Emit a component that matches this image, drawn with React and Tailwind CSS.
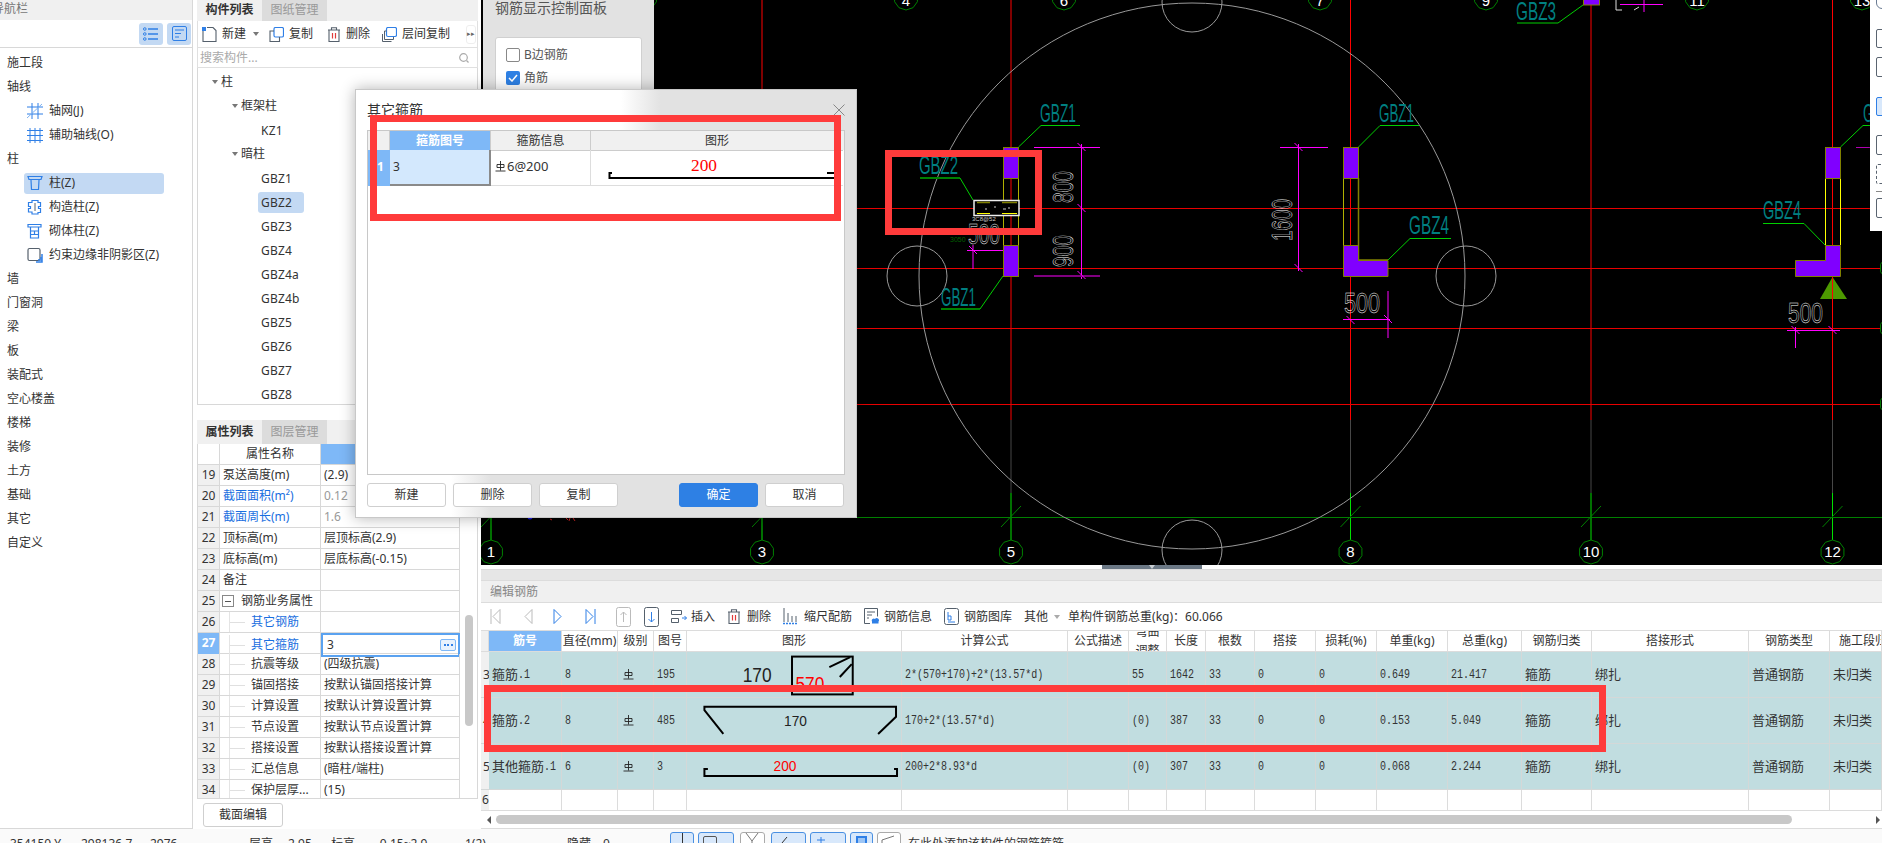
import React from 'react';

const BLUE = '#2f7fe6';
const DARK = '#55606c';

// ---- small icons ----
const Svg = ({ w = 16, h = 16, className = '', children }) => (
  <svg width={w} height={h} viewBox={`0 0 ${w} ${h}`} fill="none" className={`shrink-0 ${className}`}>
    {children}
  </svg>
);

const GridIcon = () => (
  <Svg>
    <path d="M5 0v16M11 0v16M0 4h16M0 11h16" stroke={BLUE} />
    <path d="M0 15L15 1" stroke="#7fb2f0" />
  </Svg>
);
const AuxGridIcon = () => (
  <Svg>
    <path d="M3 1v15M8 1v15M13 1v15M0 3.500h16M0 8.500h16M0 13.500h16" stroke={BLUE} />
  </Svg>
);
const ColumnIcon = () => (
  <Svg>
    <path d="M1 1.500h14l-1 3H2zM4 5l.5 9.500h7L12 5" stroke={BLUE} strokeWidth="1.200" />
  </Svg>
);
const PuzzleIcon = () => (
  <Svg>
    <path d="M5 1.500h6v2h2.500v4h-2v2h2v4H11v1.500H5V13H1.500V9.500h2v-2h-2v-4H5z" stroke={BLUE} strokeWidth="1.200" />
    <path d="M8 4v8" stroke={DARK} />
  </Svg>
);
const MasonryIcon = () => (
  <Svg>
    <path d="M1 1.500h13v2.500H1zM3.500 4v11h8V4M3.500 8h8M3.500 11.500h8M7.500 8v3.500" stroke={BLUE} strokeWidth="1.200" />
  </Svg>
);
const EdgeIcon = () => (
  <Svg>
    <rect x="1" y="1.500" width="12" height="12" rx="1.500" stroke={DARK} strokeWidth="1.200" />
    <path d="M9 15h6V7M11 13h4M13 11h2" stroke={BLUE} strokeWidth="1.500" />
  </Svg>
);
const ListIcon = () => (
  <Svg w={16} h={14}>
    <path d="M5 2h10M5 7h10M5 12h10" stroke={BLUE} strokeWidth="1.300" />
    <circle cx="1.800" cy="2" r="1.300" stroke={BLUE} />
    <circle cx="1.800" cy="7" r="1.300" stroke={BLUE} />
    <circle cx="1.800" cy="12" r="1.300" stroke={BLUE} />
  </Svg>
);
const FormIcon = () => (
  <Svg w={15} h={15}>
    <rect x="0.500" y="0.500" width="14" height="14" rx="1.500" stroke={BLUE} />
    <path d="M3 4h9M3 7.500h6M3 11h4" stroke={BLUE} />
  </Svg>
);
const NewIcon = () => (
  <Svg w={15} h={15}>
    <path d="M1 3v11.500h13V3.500L11 .5H5" stroke={DARK} strokeWidth="1.100" />
    <path d="M0 0h4v4H0z" fill={BLUE} />
  </Svg>
);
const CopyIcon = () => (
  <Svg w={15} h={15}>
    <rect x="5" y="0.500" width="9.500" height="9.500" rx="1.500" stroke={BLUE} strokeWidth="1.200" />
    <path d="M5 4H1v10.500h9.500V10" stroke={DARK} strokeWidth="1.100" />
  </Svg>
);
const TrashIcon = () => (
  <Svg w={14} h={15}>
    <path d="M1 3h12M4.500 3V.7h5V3M2 3v11.500h10V3" stroke={DARK} strokeWidth="1.100" />
    <path d="M5.500 6v5.500M8.500 6v5.500" stroke="#e03b3b" strokeWidth="1.200" />
  </Svg>
);
const LayerCopyIcon = () => (
  <Svg w={15} h={15}>
    <rect x="4.500" y="0.500" width="10" height="9" rx="1.500" stroke={BLUE} strokeWidth="1.200" />
    <path d="M4.500 4H2.500v8.500h9V10M.5 7v7.500h9" stroke={DARK} />
  </Svg>
);
const SearchIcon = () => (
  <Svg w={10} h={10}>
    <circle cx="4.500" cy="4.500" r="3.800" stroke="#aaa" strokeWidth="1.200" />
    <path d="M7.500 7.500L9.500 9.500" stroke="#aaa" strokeWidth="1.200" />
  </Svg>
);
const Caret = ({ color = '#777' }) => (
  <Svg w={6} h={4}>
    <path d="M0 0h6L3 4z" fill={color} />
  </Svg>
);
const Rebar = () => (
  <svg width="11" height="11" viewBox="0 0 11 11" fill="none" className="inline-block align-[-1px]">
    <path d="M2 3.500h7v3H2zM5.500 0v9.500M.5 10h10" stroke="#222" strokeWidth="0.900" />
  </svg>
);

// nav arrows in the rebar editor
const Arrow = ({ dir, bar, color }) => (
  <Svg w={11} h={17}>
    {dir === 'left' ? <path d="M10 1.500L3 8.500l7 7z" stroke={color} /> : <path d="M1 1.500l7 7-7 7z" stroke={color} />}
    {bar && <path d={dir === 'left' ? 'M1 1v15' : 'M10 1v15'} stroke={color} />}
  </Svg>
);
const BoxArrow = ({ up, color }) => (
  <Svg w={15} h={20}>
    <rect x="0.500" y="0.500" width="14" height="19" rx="2" stroke={up ? '#bbb' : DARK} />
    <path d={up ? 'M7.500 15V5M4.500 8l3-3 3 3' : 'M7.500 5v10M4.500 12l3 3 3-3'} stroke={color} />
  </Svg>
);
const InsertIcon = () => (
  <Svg w={16} h={15}>
    <path d="M.5 1.500h10v4H.5zM.5 9.500h7v4H.5z" stroke={DARK} />
    <path d="M11 9h4.500M13.500 7l2 2-2 2" stroke={BLUE} />
  </Svg>
);
const ScaleIcon = () => (
  <Svg w={15} h={17}>
    <path d="M1 0v14M5 5v9M9 8v6M13 8v6" stroke={DARK} />
    <path d="M0 15.500h15" stroke={BLUE} strokeWidth="1.500" strokeDasharray="2 1" />
  </Svg>
);
const InfoIcon = () => (
  <Svg w={15} h={17}>
    <path d="M6 15.500H.5V.5h13v8" stroke={DARK} />
    <path d="M3 4h8M3 7h5M3 10h2" stroke={DARK} />
    <path d="M8 13.500a2 2 0 0 1 3-2.500 2 2 0 0 1 3.500 2.500v2H8z" fill={BLUE} />
  </Svg>
);
const LibraryIcon = () => (
  <Svg w={15} h={17}>
    <rect x="0.500" y="0.500" width="14" height="16" rx="2" stroke={DARK} />
    <path d="M4 4v8h3V8H4M4 14h7" stroke={BLUE} />
  </Svg>
);

// ---- data ----
const NAV = [
  { t: '施工段' },
  { t: '轴线' },
  { t: '轴网(J)', icon: <GridIcon /> },
  { t: '辅助轴线(O)', icon: <AuxGridIcon /> },
  { t: '柱' },
  { t: '柱(Z)', icon: <ColumnIcon />, active: true },
  { t: '构造柱(Z)', icon: <PuzzleIcon /> },
  { t: '砌体柱(Z)', icon: <MasonryIcon /> },
  { t: '约束边缘非阴影区(Z)', icon: <EdgeIcon /> },
  { t: '墙' },
  { t: '门窗洞' },
  { t: '梁' },
  { t: '板' },
  { t: '装配式' },
  { t: '空心楼盖' },
  { t: '楼梯' },
  { t: '装修' },
  { t: '土方' },
  { t: '基础' },
  { t: '其它' },
  { t: '自定义' },
];

const TREE = [
  { t: '柱', depth: 0, open: true },
  { t: '框架柱', depth: 1, open: true },
  { t: 'KZ1', depth: 2 },
  { t: '暗柱', depth: 1, open: true },
  { t: 'GBZ1', depth: 2 },
  { t: 'GBZ2', depth: 2, active: true },
  { t: 'GBZ3', depth: 2 },
  { t: 'GBZ4', depth: 2 },
  { t: 'GBZ4a', depth: 2 },
  { t: 'GBZ4b', depth: 2 },
  { t: 'GBZ5', depth: 2 },
  { t: 'GBZ6', depth: 2 },
  { t: 'GBZ7', depth: 2 },
  { t: 'GBZ8', depth: 2 },
];

const PROPS = [
  { n: 19, k: '泵送高度(m)', v: '(2.9)' },
  { n: 20, k: '截面面积(m²)', v: '0.12', link: true, dim: true },
  { n: 21, k: '截面周长(m)', v: '1.6', link: true, dim: true },
  { n: 22, k: '顶标高(m)', v: '层顶标高(2.9)' },
  { n: 23, k: '底标高(m)', v: '层底标高(-0.15)' },
  { n: 24, k: '备注', v: '' },
  { n: 25, k: '钢筋业务属性', v: '', group: true },
  { n: 26, k: '其它钢筋', v: '', child: true, link: true },
  { n: 27, k: '其它箍筋', v: '3', child: true, link: true, active: true },
  { n: 28, k: '抗震等级', v: '(四级抗震)', child: true },
  { n: 29, k: '锚固搭接', v: '按默认锚固搭接计算', child: true },
  { n: 30, k: '计算设置', v: '按默认计算设置计算', child: true },
  { n: 31, k: '节点设置', v: '按默认节点设置计算', child: true },
  { n: 32, k: '搭接设置', v: '按默认搭接设置计算', child: true },
  { n: 33, k: '汇总信息', v: '(暗柱/端柱)', child: true },
  { n: 34, k: '保护层厚...', v: '(15)', child: true },
];

const HEADERS = ['', '筋号', '直径(mm)', '级别', '图号', '图形', '计算公式', '公式描述', '弯曲调整', '长度', '根数', '搭接', '损耗(%)', '单重(kg)', '总重(kg)', '钢筋归类', '搭接形式', '钢筋类型', '施工段归类'];

const ROWS = [
  { no: 3, name: '箍筋', suffix: '.1', dia: '8', fig: '195', shape: 'box', formula: '2*(570+170)+2*(13.57*d)', bend: '55', len: '1642', unit: '0.649', total: '21.417' },
  { no: 4, name: '箍筋', suffix: '.2', dia: '8', fig: '485', shape: 'hook', formula: '170+2*(13.57*d)', bend: '(0)', len: '387', unit: '0.153', total: '5.049' },
  { no: 5, name: '其他箍筋', suffix: '.1', dia: '6', fig: '3', shape: 'line', formula: '200+2*8.93*d', bend: '(0)', len: '307', unit: '0.068', total: '2.244' },
];

const TABLE_COLS = 'grid grid-cols-[8px_73px_56px_36px_33px_215px_166px_61px_38px_39px_49px_61px_61px_71px_74px_70px_157px_81px_52px]';

// narrow half width digits of the rebar grid
const Num = ({ children }) => (
  <span className="inline-block origin-left scale-x-[0.77] whitespace-nowrap font-['Liberation_Mono',monospace] text-[13px]">{children}</span>
);

const Cell = ({ children, className = '' }) => (
  <div className={`flex items-center overflow-hidden whitespace-nowrap border-r border-b border-[#d4d8d8] pl-[3px] ${className}`}>{children}</div>
);

const ShapeSvg = ({ shape }) => (
  <svg width="215" height="46" viewBox="0 0 215 46" fill="none">
    {shape === 'box' && (
      <>
        <text x="56" y="30" fontSize="20" fill="#222" textLength="29" lengthAdjust="spacingAndGlyphs" fontFamily="Liberation Sans">170</text>
        <rect x="105.500" y="4.500" width="61" height="38" stroke="#000" strokeWidth="2" />
        <path d="M164 5L143 15M165.500 12L153.500 25" stroke="#000" strokeWidth="2" />
        <text x="109" y="39" fontSize="20" fill="#f00" textLength="29" lengthAdjust="spacingAndGlyphs" fontFamily="Liberation Sans">570</text>
      </>
    )}
    {shape === 'hook' && (
      <>
        <path d="M36.500 36L17.500 12V8.700H210V18.700L192 36" stroke="#000" strokeWidth="2" />
        <text x="97.500" y="28" fontSize="14" fill="#222" textLength="23" lengthAdjust="spacingAndGlyphs" fontFamily="Liberation Sans">170</text>
      </>
    )}
    {shape === 'line' && (
      <>
        <path d="M21 25h-3.500v7H211v-7h-3" stroke="#000" strokeWidth="2" />
        <text x="87" y="27" fontSize="14" fill="#f00" textLength="23" lengthAdjust="spacingAndGlyphs" fontFamily="Liberation Sans">200</text>
      </>
    )}
  </svg>
);

// ---- CAD drawing ----
const Label = ({ x, y, w = 37, children }) => (
  <text x={x} y={y} fontSize="25" fill="#007f80" textLength={w} lengthAdjust="spacingAndGlyphs" fontFamily="Liberation Sans">{children}</text>
);
const Dim = ({ x, y, w = 33, size = 30, rotate, children }) => (
  <text
    x={x}
    y={y}
    fontSize={size}
    fill="none"
    stroke="#fff"
    strokeWidth="0.500"
    textLength={w}
    lengthAdjust="spacingAndGlyphs"
    fontFamily="Liberation Sans"
    transform={rotate ? `rotate(-90 ${x} ${y})` : undefined}
  >
    {children}
  </text>
);
const Tag = ({ x, y, label, dy = 5 }) => {
  const pts = Array.from({ length: 10 }, (_, i) => {
    const a = (i * Math.PI) / 5 + Math.PI / 10;
    return `${x + 12 * Math.cos(a)},${y + 12 * Math.sin(a)}`;
  }).join(' ');
  return (
    <g>
      <polygon points={pts} stroke="#008000" fill="#000" />
      <text x={x} y={y + dy} fontSize="15" fill="#fff" textAnchor="middle" fontFamily="Liberation Sans">{label}</text>
    </g>
  );
};
const Tick = ({ x, y }) => <path d={`M${x - 4} ${y - 4}L${x + 4} ${y + 4}`} stroke="#ff00ff" />;

const CadCanvas = () => (
  <svg width="1401" height="565" viewBox="481 0 1401 565" fill="none" className="block">
    <rect x="481" y="0" width="1401" height="565" fill="#000" />
    {/* axis lines */}
    {[491, 762, 1011, 1350.500, 1591, 1832.500].map((x) => (
      <g key={x}>
        <path d={`M${x} 0V420`} stroke="#f00" />
        <path d={`M${x} 420V493`} stroke="#777" strokeWidth="0.600" />
        <path d={`M${x} 493V552`} stroke="#00e000" />
        <path d={`M${x - 10} 527L${x + 10} 506`} stroke="#008000" />
      </g>
    ))}
    {[208.500, 268.500, 328.500, 404.500].map((y) => (
      <path key={y} d={`M481 ${y}H1882`} stroke="#e80000" />
    ))}
    <path d="M481 517.500H1882" stroke="#008000" />

    {/* circles */}
    <circle cx="1192" cy="276" r="273" stroke="#999" />
    <circle cx="917" cy="276" r="30" stroke="#999" />
    <circle cx="1466" cy="276" r="30" stroke="#999" />
    <circle cx="1192" cy="2" r="30" stroke="#999" />
    <circle cx="1192" cy="550" r="30" stroke="#999" />

    {/* axis tags */}
    {[['4', 906], ['6', 1064], ['7', 1320], ['9', 1486], ['11', 1697], ['13', 1862], ['', 645]].map(([t, x]) => (
      <Tag key={x} x={x} y={-2} label={t} dy={8} />
    ))}
    {[['1', 491], ['3', 762], ['5', 1011], ['8', 1350.500], ['10', 1591], ['12', 1832.500]].map(([t, x]) => (
      <Tag key={x} x={x} y={552} label={t} />
    ))}
    {[268, 328, 404].map((y) => (
      <Tag key={y} x={1892} y={y} label="" />
    ))}

    {/* left wall */}
    <path d="M1003.500 178V245M1018.500 178V245" stroke="#b0b000" />
    <rect x="1003.500" y="147.500" width="15" height="31" fill="#8000ff" stroke="#808000" />
    <rect x="1003.500" y="245.500" width="15" height="31" fill="#8000ff" stroke="#808000" />
    <Label x={1040} y={122} w={36}>GBZ1</Label>
    <path d="M1018.500 147L1041 125.500H1080" stroke="#00d000" />
    <Label x={919} y={174} w={39}>GBZ2</Label>
    <path d="M920 178H960" stroke="#008000" strokeWidth="2" />
    <path d="M960 178L973 200" stroke="#00d000" />
    <Label x={941} y={306} w={35}>GBZ1</Label>
    <path d="M941 309H980" stroke="#008000" strokeWidth="2" />
    <path d="M980 309L1003 276" stroke="#00d000" />

    {/* left wall dims */}
    <path d="M1034 147.500H1100M1081.500 144V279M973 245V269M967 250.500H1003" stroke="#ff00ff" />
    <path d="M1034 276H1100" stroke="#800080" strokeWidth="2" />
    <Tick x={1081.500} y={147} />
    <Tick x={1081.500} y={208} />
    <Tick x={1081.500} y={275} />
    <Tick x={973} y={250} />
    <Dim x={1073} y={203} w={32} rotate>800</Dim>
    <Dim x={1073} y={267} w={32} rotate>900</Dim>
    <Dim x={968} y={244} w={32}>500</Dim>
    <text x="950" y="242" fontSize="7" fill="#006000" fontFamily="Liberation Sans">3050</text>
    <text x="972" y="221" fontSize="6" fill="#ccc" fontFamily="Liberation Sans">3C8@52</text>
    <rect x="974" y="200.500" width="45" height="15" stroke="#eee" strokeWidth="1.500" fill="#000" />
    <path d="M977 202.500H990M1002 202.500H1017" stroke="#808000" strokeWidth="1.500" />
    <path d="M977 213.500H990M1002 213.500H1017" stroke="#ffff00" />
    <path d="M985 209h2M994 207h2M1003 209h3M1008 208h2" stroke="#ccc" />

    {/* middle wall */}
    <path d="M1343.500 178V276" stroke="#b0b000" />
    <path d="M1358.500 178V260H1388" stroke="#808000" strokeWidth="1.500" />
    <rect x="1343.500" y="147.500" width="15" height="31" fill="#8000ff" stroke="#808000" />
    <path d="M1343.500 245.500H1358.500V260.500H1388V276.500H1343.500z" fill="#8000ff" stroke="#808000" />
    <Label x={1379} y={122} w={35}>GBZ1</Label>
    <path d="M1358.500 147L1380 125.500H1419" stroke="#00d000" />
    <Label x={1409} y={234} w={40}>GBZ4</Label>
    <path d="M1388 260L1410 238.500H1451" stroke="#00d000" />
    <path d="M1280 147.500H1328M1298.500 144V271M1343 319.500H1390M1388 291V338" stroke="#ff00ff" />
    <Tick x={1298.500} y={147} />
    <Tick x={1298.500} y={268} />
    <Tick x={1350.500} y={320} />
    <Tick x={1388} y={319} />
    <Dim x={1292} y={241} w={42} rotate>1600</Dim>
    <Dim x={1344} y={313} w={36}>500</Dim>

    {/* right wall */}
    <path d="M1825.500 178V245M1840.500 178V245" stroke="#ffff00" />
    <rect x="1825.500" y="147.500" width="15" height="31" fill="#8000ff" stroke="#808000" />
    <path d="M1825.500 245.500H1840.500V276.500H1795.500V260.500H1825.500z" fill="#8000ff" stroke="#808000" />
    <path d="M1832.500 277L1820 299H1847z" fill="#4d9900" />
    <path d="M1832.500 277V299" stroke="#f00" />
    <Label x={1763} y={219} w={38}>GBZ4</Label>
    <path d="M1763 223.500H1804L1825 245" stroke="#00d000" />
    <Label x={1863} y={122} w={36}>GBZ1</Label>
    <path d="M1840.500 147L1863 125.500H1880" stroke="#00d000" />
    <path d="M1856 147.500H1880" stroke="#b000b0" />
    <path d="M1787 330.500H1840M1795.500 327V348" stroke="#ff00ff" />
    <Tick x={1795.500} y={330} />
    <Tick x={1832.500} y={330} />
    <Dim x={1788} y={323} w={35} size={30}>500</Dim>

    {/* top of the wall at axis 10 */}
    <rect x="1583.500" y="-1" width="16" height="6" fill="#8000ff" stroke="#808000" />
    <Label x={1516} y={20} w={40}>GBZ3</Label>
    <path d="M1583 5L1558 23H1517" stroke="#00d000" />
    <path d="M1620 4.500H1663M1644 0V12" stroke="#ff00ff" />
    <path d="M1616 0V10H1622M1634 10l5-3" stroke="#ddd" />

    {/* stray marks under the dialog */}
    <circle cx="530" cy="517" r="2.500" fill="#1a1ae0" />
    <path d="M550 519l2 1M566 518l2 2M570 518l-1 3M573 518l2 3" stroke="#c02020" />
  </svg>
);

const DialogBtn = ({ children, primary, className = '' }) => (
  <button className={`h-[24px] w-[79px] rounded-[3px] border text-[12px] ${primary ? 'border-[#2e80e4] bg-[#2e80e4] text-white' : 'border-[#cfcfcf] bg-white text-[#333]'} ${className}`}>
    {children}
  </button>
);

const StatusBtn = ({ w, on = true, ml, children }) => (
  <div style={{ width: w, marginLeft: ml }} className={`mt-[3px] h-[22px] shrink-0 rounded-[3px] border ${on ? 'border-[#4a90e2] bg-[#d8e8fb]' : 'border-[#aaa] bg-white'}`}>
    {children}
  </div>
);

export default function App() {
  return (
    <div lang="zh-CN" className="relative h-[843px] w-[1882px] overflow-hidden bg-white font-['Noto_Sans','Noto_Sans_CJK_SC',sans-serif] text-[12px] text-[#333]">
      <div className="flex h-[829px]">
        {/* nav panel */}
        <div className="flex h-[829px] w-[193px] shrink-0 flex-col border-r border-b border-[#d8d8d8]">
          <div className="h-[20px] overflow-hidden whitespace-nowrap bg-[#f0f0f0] leading-[18px] text-[#777]">
            <span className="ml-[-8px] inline-block">导航栏</span>
          </div>
          <div className="flex h-[28px] items-center justify-end gap-[4px] border-b border-[#d8d8d8] pr-[1px]">
            <div className="flex h-[22px] w-[24px] items-center justify-center rounded-[3px] bg-[#c3d9f3]"><ListIcon /></div>
            <div className="flex h-[22px] w-[24px] items-center justify-center rounded-[3px] bg-[#c3d9f3]"><FormIcon /></div>
          </div>
          <div className="pt-[3px]">
            {NAV.map((item) =>
              item.icon ? (
                <div key={item.t} className="ml-[24px] h-[24px] w-[140px] py-[1.500px]">
                  <div className={`flex h-[21px] items-center gap-[6px] whitespace-nowrap rounded-[3px] pl-[3px] ${item.active ? 'bg-[#c3d9f3]' : ''}`}>
                    {item.icon}
                    <span>{item.t}</span>
                  </div>
                </div>
              ) : (
                <div key={item.t} className="h-[24px] pl-[7px] leading-[24px]">{item.t}</div>
              )
            )}
          </div>
        </div>

        {/* component list + properties */}
        <div className="ml-[4px] flex w-[281px] shrink-0 flex-col">
          <div className="flex h-[21px] bg-[#f0f0f0]">
            <div className="w-[65px] text-center font-bold leading-[20px]">构件列表</div>
            <div className="w-[65px] bg-[#dcdcdc] text-center leading-[20px] text-[#999]">图纸管理</div>
          </div>
          <div className="flex h-[27px] items-center border-x border-b border-[#e0e0e0] pl-[4px]">
            <NewIcon />
            <span className="ml-[5px]">新建</span>
            <span className="ml-[7px]"><Caret /></span>
            <span className="ml-[10px]"><CopyIcon /></span>
            <span className="ml-[5px]">复制</span>
            <span className="ml-[14px]"><TrashIcon /></span>
            <span className="ml-[5px]">删除</span>
            <span className="ml-[12px]"><LayerCopyIcon /></span>
            <span className="ml-[5px]">层间复制</span>
            <div className="ml-[16px] flex h-[19px] w-[10px] items-center justify-center rounded-[3px] border border-[#eee] text-[7px] text-[#666]">▸▸</div>
          </div>
          <div className="flex h-[20px] items-center justify-between border-x border-b border-[#e0e0e0] pl-[2px] pr-[8px] text-[#aaa]">
            <span>搜索构件...</span>
            <SearchIcon />
          </div>
          <div className="h-[337px] overflow-hidden border-x border-b border-[#d8d8d8] pt-[2px]">
            {TREE.map((n) => (
              <div key={n.t} className="flex h-[24px] items-center">
                {n.open && (
                  <span className={n.depth === 0 ? 'ml-[14px] mr-[3px]' : 'ml-[34px] mr-[3px]'}><Caret /></span>
                )}
                {!n.open && (
                  <span className={`ml-[60px] rounded-[3px] px-[3px] leading-[21px] tracking-[0.2px] ${n.active ? 'bg-[#c3d9f3] pr-[12px]' : ''}`}>{n.t}</span>
                )}
                {n.open && <span>{n.t}</span>}
              </div>
            ))}
          </div>
          <div className="h-[15px] bg-white" />
          <div className="flex h-[24px] bg-[#f0f0f0]">
            <div className="w-[65px] text-center font-bold leading-[24px]">属性列表</div>
            <div className="w-[65px] bg-[#dcdcdc] text-center leading-[24px] text-[#999]">图层管理</div>
          </div>
          <div className="relative h-[355px] overflow-hidden border-x border-b border-[#d8d8d8]">
            <div className="grid h-[21px] w-[262px] grid-cols-[22px_101px_139px] border-b border-[#d8d8d8]">
              <div className="border-r border-[#d8d8d8]" />
              <div className="border-r border-[#d8d8d8] text-center leading-[20px]">属性名称</div>
              <div className="border-r border-[#d8d8d8] bg-[#7eb8f7]" />
            </div>
            {PROPS.map((p) => (
              <div key={p.n} className="grid h-[21px] w-[262px] grid-cols-[22px_101px_139px] border-b border-[#d8d8d8] leading-[20px]">
                <div className={`border-r border-[#d8d8d8] text-center ${p.active ? 'bg-[#7eb8f7] font-bold text-white' : 'bg-[#f0f0f0]'}`}>{p.n}</div>
                <div className={`flex items-center overflow-hidden whitespace-nowrap border-r border-[#d8d8d8] ${p.link ? 'text-[#1a6fe0]' : ''}`}>
                  {p.child && (
                    <span className="ml-[9px] mr-[6px] flex h-[21px] w-[16px] items-center border-l border-[#e4e4e4]">
                      <span className="h-px w-full bg-[#e0e0e0]" />
                    </span>
                  )}
                  {p.group && (
                    <span className="ml-[2px] mr-[7px] flex h-[12px] w-[12px] items-center justify-center border border-[#888]">
                      <span className="h-px w-[6px] bg-[#555]" />
                    </span>
                  )}
                  {!p.child && !p.group && <span className="ml-[3px]" />}
                  {p.k}
                </div>
                {p.active ? (
                  <div className="flex items-center justify-between border-2 border-[#5aa2f0] pl-[4px] pr-[2px]">
                    <span>{p.v}</span>
                    <span className="flex h-[12px] w-[16px] items-center justify-center gap-[1.500px] rounded-[2px] border border-[#7eb8f7] bg-[#e8f2fd]">
                      <i className="h-[2px] w-[2px] bg-[#2f7fe6]" />
                      <i className="h-[2px] w-[2px] bg-[#2f7fe6]" />
                      <i className="h-[2px] w-[2px] bg-[#2f7fe6]" />
                    </span>
                  </div>
                ) : (
                  <div className={`whitespace-nowrap border-r border-[#d8d8d8] pl-[3px] ${p.dim ? 'text-[#999]' : ''}`}>{p.v}</div>
                )}
              </div>
            ))}
            <div className="absolute left-[267px] top-[171px] h-[111px] w-[8px] rounded-[4px] bg-[#c8c8c8]" />
          </div>
          <div className="pl-[6px] pt-[4px]">
            <button className="h-[24px] w-[80px] rounded-[3px] border border-[#cfcfcf] bg-white text-[12px]">截面编辑</button>
          </div>
        </div>

        {/* drawing + rebar editor */}
        <div className="ml-[3px] flex w-[1401px] shrink-0 flex-col">
          <CadCanvas />
          <div className="flex h-[4px] justify-center bg-white">
            <div className="ml-[-59px] flex h-[4px] w-[100px] justify-center bg-[#6b7885]">
              <svg width="6" height="4" viewBox="0 0 6 4"><path d="M0 0h6L3 4z" fill="#c9ced3" /></svg>
            </div>
          </div>
          <div className="h-[12px] border-y border-[#dcdcdc] bg-[#e6e6e6]" />
          <div className="flex h-[22px] items-center border-b border-[#dcdcdc] bg-[#f0f0f0] pl-[9px] text-[#888]">编辑钢筋</div>
          <div className="flex h-[28px] items-center border-b border-[#dcdcdc] pl-[9px]">
            <Arrow dir="left" bar color="#bbb" />
            <span className="ml-[21px]"><Arrow dir="left" color="#bbb" /></span>
            <span className="ml-[20px]"><Arrow dir="right" color={BLUE} /></span>
            <span className="ml-[21px]"><Arrow dir="right" bar color={BLUE} /></span>
            <span className="ml-[20px]"><BoxArrow up color="#bbb" /></span>
            <span className="ml-[13px]"><BoxArrow color={BLUE} /></span>
            <span className="ml-[12px]"><InsertIcon /></span>
            <span className="ml-[4px]">插入</span>
            <span className="ml-[12px]"><TrashIcon /></span>
            <span className="ml-[6px]">删除</span>
            <span className="ml-[12px]"><ScaleIcon /></span>
            <span className="ml-[6px]">缩尺配筋</span>
            <span className="ml-[12px]"><InfoIcon /></span>
            <span className="ml-[5px]">钢筋信息</span>
            <span className="ml-[12px]"><LibraryIcon /></span>
            <span className="ml-[5px]">钢筋图库</span>
            <span className="ml-[12px]">其他</span>
            <span className="ml-[6px]"><Caret color="#aaa" /></span>
            <span className="ml-[8px]">单构件钢筋总重(kg)：60.066</span>
          </div>

          <div className={`${TABLE_COLS} h-[21px]`}>
            {HEADERS.map((h, i) => (
              <div
                key={i}
                className={`flex items-center justify-center overflow-hidden whitespace-nowrap border-r border-b border-[#dcdcdc] ${i === 1 ? 'bg-[#7eb8f7] font-bold text-white' : ''} ${i === 0 ? 'bg-[#f0f0f0]' : ''}`}
              >
                {i === 8 ? (
                  <span className="w-[24px] whitespace-normal text-center leading-[19px]">弯曲调整</span>
                ) : i === 18 ? (
                  <span className="ml-[9px] w-[43px] overflow-hidden">{h}</span>
                ) : (
                  h
                )}
              </div>
            ))}
          </div>

          {ROWS.map((r) => (
            <div key={r.no} className={`${TABLE_COLS} h-[46px] bg-[#c1dde0]`}>
              <div className="flex items-center overflow-hidden bg-[#f0f0f0] pl-[2px] border-b border-[#d4d8d8]">{r.no}</div>
              <Cell>
                <span className="text-[13px]">{r.name}</span>
                <Num>{r.suffix}</Num>
              </Cell>
              <Cell><Num>{r.dia}</Num></Cell>
              <Cell className="pl-[5px]"><Rebar /></Cell>
              <Cell><Num>{r.fig}</Num></Cell>
              <Cell className="!pl-0"><ShapeSvg shape={r.shape} /></Cell>
              <Cell><Num>{r.formula}</Num></Cell>
              <Cell />
              <Cell><Num>{r.bend}</Num></Cell>
              <Cell><Num>{r.len}</Num></Cell>
              <Cell><Num>33</Num></Cell>
              <Cell><Num>0</Num></Cell>
              <Cell><Num>0</Num></Cell>
              <Cell><Num>{r.unit}</Num></Cell>
              <Cell><Num>{r.total}</Num></Cell>
              <Cell><span className="text-[13px]">箍筋</span></Cell>
              <Cell><span className="text-[13px]">绑扎</span></Cell>
              <Cell><span className="text-[13px]">普通钢筋</span></Cell>
              <Cell><span className="text-[13px]">未归类</span></Cell>
            </div>
          ))}
          <div className={`${TABLE_COLS} h-[21px]`}>
            <div className="flex items-center overflow-hidden bg-[#f0f0f0] pl-[1px] border-b border-[#dcdcdc]">6</div>
            {HEADERS.slice(1).map((h) => (
              <div key={h} className="border-r border-b border-[#dcdcdc]" />
            ))}
          </div>
          <div className="flex h-[18px] items-center border-b border-[#dcdcdc] pl-[6px]">
            <svg width="4" height="8" viewBox="0 0 4 8"><path d="M4 0v8L0 4z" fill="#555" /></svg>
            <div className="ml-[5px] h-[9px] w-[1296px] rounded-[5px] bg-[#c8c8c8]" />
            <svg width="4" height="8" viewBox="0 0 4 8" className="ml-[84px]"><path d="M0 0v8l4-4z" fill="#555" /></svg>
          </div>
        </div>
      </div>

      {/* status bar */}
      <div className="flex h-[14px] items-start overflow-hidden whitespace-nowrap bg-[#fafafa] pl-[10px] text-[12px] leading-[14px]">
        <span className="mt-[8px] w-[71px] shrink-0">354150 Y</span>
        <span className="mt-[8px] w-[69px] shrink-0">298136.7</span>
        <span className="mt-[8px] w-[99px] shrink-0">2976</span>
        <span className="mt-[8px] w-[39px] shrink-0">层高</span>
        <span className="mt-[8px] w-[43px] shrink-0">2.95</span>
        <span className="mt-[8px] w-[45px] shrink-0">标高</span>
        <span className="mt-[8px] w-[89px] shrink-0">-0.15~2.9</span>
        <span className="mt-[8px] w-[102px] shrink-0">1(2)</span>
        <span className="mt-[8px] w-[36px] shrink-0">隐藏</span>
        <span className="mt-[8px] w-[67px] shrink-0">0</span>
        <StatusBtn w={24}><div className="ml-[11px] h-[11px] w-px bg-[#333]" /></StatusBtn>
        <StatusBtn w={36} ml={4}><div className="ml-[4px] mt-[3px] h-[11px] w-[14px] rounded-[2px] border border-[#555]" /></StatusBtn>
        <StatusBtn w={25} ml={6} on={false}>
          <svg width="23" height="11" viewBox="0 0 23 11" fill="none"><path d="M5 0l6 8 6-8M11 8v3" stroke="#777" /></svg>
        </StatusBtn>
        <StatusBtn w={35} ml={6}>
          <svg width="33" height="11" viewBox="0 0 33 11" fill="none"><path d="M10 10l5-6" stroke="#333" /></svg>
        </StatusBtn>
        <StatusBtn w={36} ml={4}>
          <svg width="34" height="11" viewBox="0 0 34 11" fill="none"><path d="M10 4v7M6 7h8" stroke={BLUE} /></svg>
        </StatusBtn>
        <StatusBtn w={23} ml={4}><div className="ml-[5px] mt-[3px] h-[11px] w-[11px] border-2 border-[#2f7fe6] bg-[#9cc5f5]" /></StatusBtn>
        <StatusBtn w={24} ml={4} on={false}>
          <svg width="22" height="11" viewBox="0 0 22 11" fill="none"><path d="M4 11V7l12-4" stroke="#777" /></svg>
        </StatusBtn>
        <span className="ml-[7px] mt-[8px]">在此处添加该构件的钢筋箍筋</span>
      </div>

      {/* control panel floating on the drawing */}
      <div className="absolute left-[483px] top-0 h-[500px] w-[171px] bg-[#e2e2e2] px-[12px]">
        <div className="h-[37px] whitespace-nowrap text-[14px] leading-[16px] text-[#555]">钢筋显示控制面板</div>
        <div className="h-[300px] rounded-[3px] border border-[#d0d0d0] bg-white pl-[10px] pt-[10px]">
          <div className="flex h-[23px] items-start gap-[4px]">
            <span className="h-[14px] w-[14px] rounded-[2px] border border-[#888] bg-white" />
            <span className="leading-[14px] text-[#555]">B边钢筋</span>
          </div>
          <div className="flex h-[23px] items-start gap-[4px]">
            <span className="flex h-[14px] w-[14px] items-center justify-center rounded-[2px] bg-[#2e80e4]">
              <svg width="10" height="8" viewBox="0 0 10 8" fill="none"><path d="M1 4l3 3 5-6" stroke="#fff" strokeWidth="1.500" /></svg>
            </span>
            <span className="leading-[14px] text-[#555]">角筋</span>
          </div>
        </div>
      </div>

      {/* right tool strip */}
      <div className="absolute left-[1870px] top-0 flex h-[231px] w-[12px] flex-col bg-white pl-[6px] shadow-[0_0_2px_rgba(0,0,0,.4)]">
        <div className="mt-[-9px] h-[18px] w-[16px] rounded-[6px] border border-[#6b7c93]" />
        <div className="mt-[20px] h-[19px] w-[16px] rounded-[2px] border border-[#5a6470]" />
        <div className="mt-[9px] h-[20px] w-[16px] rounded-[2px] border border-[#5a6470]" />
        <div className="mt-[20px] h-[19px] w-[16px] rounded-[2px] border border-[#2f7fe6] bg-[#d8e8fb]" />
        <div className="mt-[19px] h-[20px] w-[16px] rounded-[2px] border border-[#5a6470]" />
        <div className="mt-[9px] h-[20px] w-[16px] rounded-[2px] border border-dashed border-[#5a6470]" />
        <div className="mt-[7px] h-px w-[16px] bg-[#888]" />
        <div className="mt-[6px] h-[20px] w-[16px] rounded-[2px] border border-[#5a6470]" />
      </div>

      {/* dialog */}
      <div className="absolute left-[355px] top-[89px] flex h-[429px] w-[502px] flex-col border border-[#c8c8c8] bg-[linear-gradient(90deg,#fff_50%,#e2e2e2_50%)] shadow-[0_0_14px_rgba(0,0,0,.3)]">
        <div className="flex h-[40px] shrink-0 items-start justify-between bg-[linear-gradient(90deg,#fff_265px,#e2e2e2_305px)] pl-[11px] pr-[11px] pt-[10px]">
          <span className="text-[14px] leading-[19px]">其它箍筋</span>
          <svg width="12" height="12" viewBox="0 0 12 12" fill="none" className="mt-[4px]"><path d="M.5.5l11 11M11.500.5l-11 11" stroke="#888" /></svg>
        </div>
        <div className="mx-[11px] h-[345px] shrink-0 border border-[#c8c8c8] bg-white">
          <div className="grid h-[19px] grid-cols-[22px_101px_100px_252px] bg-[#f0f0f0]">
            <div className="border-r border-b border-[#ccc]" />
            <div className="border-r border-b border-[#ccc] bg-[#7eb8f7] text-center font-bold leading-[19px] text-white">箍筋图号</div>
            <div className="border-r border-b border-[#ccc] text-center leading-[19px]">箍筋信息</div>
            <div className="border-b border-[#ccc] text-center leading-[19px]">图形</div>
          </div>
          <div className="grid h-[36px] grid-cols-[22px_101px_100px_252px]">
            <div className="bg-[#7eb8f7] pl-[9px] font-bold leading-[34px] text-white">1</div>
            <div className="border-r-2 border-b-2 border-[#8a8a8a] bg-[#d3e8fd] pl-[3px] leading-[34px]">3</div>
            <div className="flex items-center gap-[1px] border-r border-b border-[#ddd] pb-[2px] pl-[4px] text-[13px]">
              <Rebar />
              <span>6@200</span>
            </div>
            <div className="border-b border-[#ddd]">
              <svg width="251" height="35" viewBox="0 0 251 35" fill="none">
                <text x="100" y="21" fontSize="16" fill="#f00" textLength="26" lengthAdjust="spacingAndGlyphs" fontFamily="Liberation Serif">200</text>
                <path d="M21 23h-2.500v5H244M236 23h8" stroke="#000" strokeWidth="2" />
              </svg>
            </div>
          </div>
        </div>
        <div className="flex grow items-start bg-[linear-gradient(90deg,#fff_95px,#e2e2e2_135px)] pl-[11px] pt-[8px]">
          <DialogBtn>新建</DialogBtn>
          <DialogBtn className="ml-[7px]">删除</DialogBtn>
          <DialogBtn className="ml-[7px]">复制</DialogBtn>
          <DialogBtn primary className="ml-[61px]">确定</DialogBtn>
          <DialogBtn className="ml-[7px]">取消</DialogBtn>
        </div>
      </div>

      {/* red review marks */}
      <div className="absolute left-[370px] top-[115px] h-[106px] w-[471px] border-[7px] border-[#ff3b3b]" />
      <div className="absolute left-[885px] top-[150px] h-[85px] w-[157px] border-[7px] border-[#ff3b3b]" />
      <div className="absolute left-[484px] top-[685px] h-[67px] w-[1122px] border-[7px] border-[#ff3b3b]" />
    </div>
  );
}
